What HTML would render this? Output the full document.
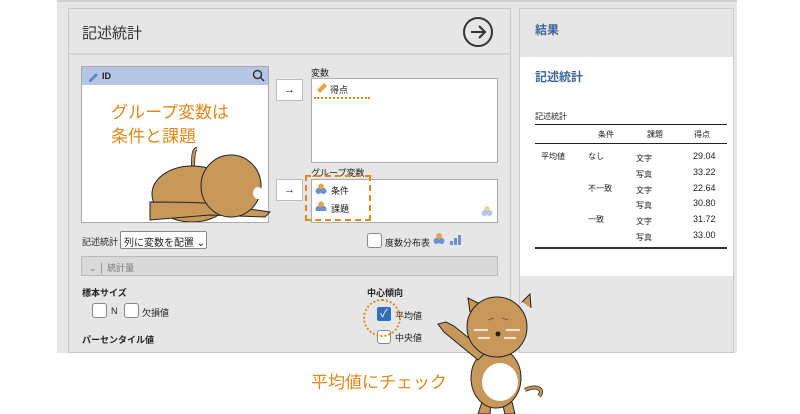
<!DOCTYPE html>
<html><head><meta charset="utf-8"><style>
*{margin:0;padding:0;box-sizing:border-box}
body{width:800px;height:414px;background:#fff;position:relative;overflow:hidden;font-family:"Liberation Sans","Noto Sans CJK JP",sans-serif;color:#222}
.a{position:absolute;white-space:nowrap}
.box{position:absolute;background:#fff;border:1px solid #aaa}
.cb{position:absolute;width:15px;height:15px;border:1px solid #888;border-radius:3px;background:#fff}
.s{font-size:9px}
.o{color:#e0891c}
</style></head><body>
<div class="a" style="left:57px;top:0;width:680px;height:353px;background:#e6e6e6;border-top:2px solid #d0d0d0"></div>
<div class="a" style="left:68px;top:8px;width:443px;height:345px;background:#e6e6e6;border:1px solid #c8c8c8"></div>
<div class="a" style="left:69px;top:53px;width:441px;height:2px;background:#d6d6d6"></div>
<div class="a" style="left:82px;top:22px;font-size:15px;color:#333">記述統計</div>
<svg class="a" style="left:462px;top:16px" width="32" height="32"><circle cx="16" cy="16" r="14" fill="none" stroke="#333" stroke-width="2"/><path d="M9 16H22M17 10l6 6-6 6" fill="none" stroke="#333" stroke-width="2"/></svg>

<div class="box" style="left:81px;top:66px;width:188px;height:157px"></div>
<div class="a" style="left:82px;top:67px;width:186px;height:18px;background:#b4c6e4"></div>
<svg class="a" style="left:87px;top:70px" width="12" height="12"><path d="M2 10L9 3l2 2-7 7H2z" fill="#5a87c8"/></svg>
<div class="a s" style="left:102px;top:71px;font-weight:bold">ID</div>
<svg class="a" style="left:252px;top:69px" width="13" height="13"><circle cx="5.5" cy="5.5" r="4" fill="none" stroke="#333" stroke-width="1.5"/><path d="M8.5 8.5L12 12" stroke="#333" stroke-width="1.5"/></svg>
<div class="a o" style="left:111px;top:101px;font-size:17px;line-height:24px">グループ変数は<br>条件と課題</div>
<svg class="a" style="left:140px;top:144px" width="135" height="78">
<path d="M57 5c-4 0-4 10-4 20" stroke="#222" stroke-width="4" fill="none"/><path d="M57 5c-4 0-4 10-4 20" stroke="#c8975a" stroke-width="2.5" fill="none"/>
<ellipse cx="52" cy="50" rx="40" ry="28" fill="#c8975a" stroke="#222"/>
<path d="M10 58c20 0 50 0 65 2l55 8-5 5-55-2-60 5z" fill="#c8975a" stroke="#222"/>
<ellipse cx="91" cy="42" rx="30" ry="31" fill="#c8975a" stroke="#222"/>
<ellipse cx="118" cy="49" rx="5" ry="6" fill="#fff"/>
</svg>

<div class="box" style="left:276px;top:79px;width:27px;height:22px;border-color:#bbb;text-align:center;font-size:11px;line-height:20px">→</div>
<div class="box" style="left:276px;top:179px;width:27px;height:22px;border-color:#bbb;text-align:center;font-size:11px;line-height:20px">→</div>
<div class="a s" style="left:311px;top:66px">変数</div>
<div class="box" style="left:311px;top:78px;width:187px;height:85px"></div>
<svg class="a" style="left:316px;top:82px" width="12" height="12"><path d="M1 8L8 1l3 3-7 7z" fill="#e8a640"/></svg>
<div class="a s" style="left:330px;top:83px">得点</div>
<div class="a" style="left:314px;top:97px;width:56px;border-top:2px dotted #e0891c"></div>
<div class="a s" style="left:311px;top:166px">グループ変数</div>
<div class="box" style="left:311px;top:179px;width:187px;height:44px"></div>
<svg class="a" style="left:315px;top:183px" width="12" height="28"><circle cx="6" cy="3.5" r="3" fill="#e8a640"/><circle cx="3.5" cy="8" r="3" fill="#6a92d0"/><circle cx="8.5" cy="8" r="3" fill="#6a92d0"/><circle cx="6" cy="21.5" r="3" fill="#e8a640"/><circle cx="3.5" cy="26" r="3" fill="#6a92d0"/><circle cx="8.5" cy="26" r="3" fill="#6a92d0"/></svg>
<div class="a s" style="left:331px;top:184px">条件</div>
<div class="a s" style="left:331px;top:202px">課題</div>
<svg class="a" style="left:481px;top:205px" width="12" height="12" opacity=".5"><circle cx="6" cy="4" r="3" fill="#e8a640"/><circle cx="3.5" cy="8" r="3" fill="#6a92d0"/><circle cx="8.5" cy="8" r="3" fill="#6a92d0"/></svg>
<div class="a" style="left:305px;top:175px;width:66px;height:46px;border:2px dashed #e0891c"></div>

<div class="a s" style="left:82px;top:235px">記述統計</div>
<div class="box" style="left:120px;top:231px;width:87px;height:18px;border-color:#888;border-radius:2px;font-size:10px;padding:2px 3px;white-space:nowrap;overflow:hidden">列に変数を配置 ⌄</div>
<div class="cb" style="left:367px;top:233px"></div>
<div class="a s" style="left:385px;top:236px">度数分布表</div>
<svg class="a" style="left:433px;top:232px" width="30" height="14"><circle cx="6" cy="4" r="3" fill="#e8a640"/><circle cx="3.5" cy="9" r="3" fill="#6a92d0"/><circle cx="8.5" cy="9" r="3" fill="#6a92d0"/><rect x="17" y="9" width="3" height="4" fill="#6a92d0"/><rect x="21" y="6" width="3" height="7" fill="#6a92d0"/><rect x="25" y="3" width="3" height="10" fill="#6a92d0"/></svg>
<div class="a" style="left:81px;top:256px;width:417px;height:20px;background:#d9d9d9;border:1px solid #bbb"></div>
<div class="a s" style="left:89px;top:261px;color:#777">⌄ │ 統計量</div>
<div class="a s" style="left:82px;top:286px;font-weight:bold">標本サイズ</div>
<div class="cb" style="left:92px;top:303px"></div><div class="a s" style="left:111px;top:306px">N</div>
<div class="cb" style="left:124px;top:303px"></div><div class="a s" style="left:142px;top:306px">欠損値</div>
<div class="a s" style="left:82px;top:333px;font-weight:bold">パーセンタイル値</div>
<div class="a s" style="left:367px;top:286px;font-weight:bold">中心傾向</div>
<div class="a" style="left:377px;top:307px;width:14px;height:14px;background:#2f6fba;border-radius:2px;color:#fff;font-size:11px;line-height:14px;text-align:center">✓</div>
<div class="a s" style="left:395px;top:309px">平均値</div>
<div class="cb" style="left:377px;top:330px;width:14px;height:14px"></div>
<div class="a s" style="left:395px;top:331px">中央値</div>
<div class="a" style="left:363px;top:299px;width:38px;height:38px;border:2px dotted #e0891c;border-radius:50%"></div>

<div class="a" style="left:519px;top:8px;width:215px;height:345px;background:#e6e6e6;border:1px solid #ccc"></div>
<div class="a" style="left:520px;top:57px;width:213px;height:219px;background:#fff"></div>
<div class="a" style="left:535px;top:21px;font-size:12px;font-weight:bold;color:#3a66a0">結果</div>
<div class="a" style="left:535px;top:68px;font-size:12px;font-weight:bold;color:#3a66a0">記述統計</div>
<div class="a" style="left:535px;top:111px;font-size:8px">記述統計</div>
<div class="a" style="left:535px;top:124px;width:192px;border-top:1px solid #222"></div>
<div class="a" style="left:535px;top:143px;width:192px;border-top:1px solid #222"></div>
<div class="a" style="left:535px;top:247px;width:192px;border-top:2px solid #333"></div>
<div class="a" style="font-size:8px;left:598px;top:129px">条件</div><div class="a" style="font-size:8px;left:647px;top:129px">課題</div><div class="a" style="font-size:8px;left:694px;top:129px">得点</div>
<div class="a" style="font-size:8px;left:541px;top:151px">平均値</div>
<div class="a" style="font-size:8px;left:588px;top:151px">なし</div>
<div class="a" style="font-size:8px;left:588px;top:183px">不一致</div>
<div class="a" style="font-size:8px;left:588px;top:214px">一致</div>
<div class="a" style="font-size:8px;left:636px;top:151px;line-height:15.8px">文字<br>写真<br>文字<br>写真<br>文字<br>写真</div>
<div class="a" style="font-size:9px;left:693px;top:149px;line-height:15.8px">29.04<br>33.22<br>22.64<br>30.80<br>31.72<br>33.00</div>

<div class="a o" style="left:311px;top:368px;font-size:17px">平均値にチェック</div>
<svg class="a" style="left:430px;top:290px" width="120" height="124">
<path d="M95 100c12-6 20 0 14 6" stroke="#222" stroke-width="4" fill="none"/><path d="M95 100c12-6 20 0 14 6" stroke="#c8975a" stroke-width="2.5" fill="none"/>
<path d="M52 112l-4 12h12l1-12zM72 112l3 12h10l-3-12z" fill="#c8975a" stroke="#222"/>
<ellipse cx="66" cy="88" rx="25" ry="30" fill="#c8975a" stroke="#222"/>
<ellipse cx="70" cy="92" rx="18" ry="19" fill="#fff"/>
<path d="M48 70L14 42l-6-8 8-2 8 4 32 26z" fill="#c8975a" stroke="#222"/>
<path d="M40 22l-2-14 12 6M92 12l8-8 1 14" fill="#c8975a" stroke="#222"/>
<circle cx="67" cy="37" r="30" fill="#c8975a" stroke="#222"/>
<path d="M44 40h14M76 40h14M48 48h12M74 48h12" stroke="#fff" stroke-width="1.5"/>
<circle cx="68" cy="44" r="2.5" fill="#222"/>
<path d="M58 30l6-2M72 28l6 2" stroke="#8a5a2a"/>
</svg>
</body></html>
